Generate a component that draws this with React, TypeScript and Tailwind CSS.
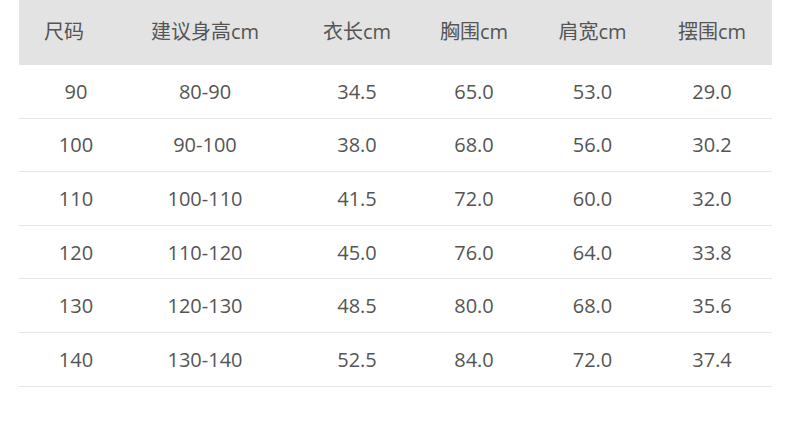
const headers = ["尺码", "建议身高cm", "衣长cm", "胸围cm", "肩宽cm", "摆围cm"]

const rows = [
    ["90", "80-90", "34.5", "65.0", "53.0", "29.0"],
    ["100", "90-100", "38.0", "68.0", "56.0", "30.2"],
    ["110", "100-110", "41.5", "72.0", "60.0", "32.0"],
    ["120", "110-120", "45.0", "76.0", "64.0", "33.8"],
    ["130", "120-130", "48.5", "80.0", "68.0", "35.6"],
    ["140", "130-140", "52.5", "84.0", "72.0", "37.4"],
]

// column widths chosen so cell centres line up with the reference
const cols = "grid grid-cols-[121px_141px_134px_118px_119px_120px]"
const cellPad = ["pr-[7px]", "pr-[11px]", "pl-[18px]", "", "", ""]

export default function App() {
    return (
        <div
            className="w-[790px] h-[431px] bg-white text-[#555555] text-[20px]"
            style={{ fontFamily: '"Open Sans", "Noto Sans CJK SC", sans-serif' }}
        >
            <div className="ml-[19px] w-[753px]">
                {/* Header */}
                <div className={`${cols} h-[65px] bg-[#e3e3e3] items-center`}>
                    {headers.map((h, i) => (
                        <div
                            key={h}
                            className={`text-center pb-[1px] ${i === 0 ? "pr-[31px]" : cellPad[i]}`}
                        >
                            {h}
                        </div>
                    ))}
                </div>

                {/* Body */}
                {rows.map((row) => (
                    <div key={row[0]} className={`${cols} h-[53.6px] border-b border-[#e6e6e6] items-center`}>
                        {row.map((cell, i) => (
                            <div key={i} className={`text-center pt-[1px] ${cellPad[i]}`}>
                                {cell}
                            </div>
                        ))}
                    </div>
                ))}
            </div>
        </div>
    )
}
